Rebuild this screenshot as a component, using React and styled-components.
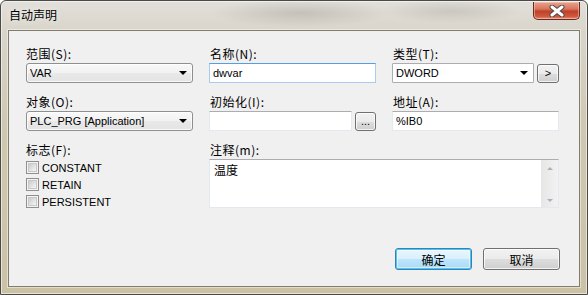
import React from "react";
import styled, { createGlobalStyle } from "styled-components";

const Global = createGlobalStyle`
  html, body { margin: 0; padding: 0; background: #ffffff; }
  * { box-sizing: border-box; }
`;

const cjk = `"Noto Sans CJK SC", "Microsoft YaHei", sans-serif`;
const latin = `"Liberation Sans", "Noto Sans CJK SC", sans-serif`;

const Window = styled.div`
  width: 588px;
  height: 295px;
  border: 1px solid #4b4a47;
  border-radius: 6px 6px 0 0;
  background:
    radial-gradient(ellipse 90px 14px at 300px 12px, rgba(120,115,105,0.25), transparent),
    radial-gradient(ellipse 70px 12px at 450px 10px, rgba(130,125,115,0.22), transparent),
    linear-gradient(to bottom, #e2e0da 0px, #d9d5cb 29px, #cfc8b2 120px, #cbc2a6 100%);
  box-shadow: inset 0 0 0 1px rgba(255, 255, 255, 0.55);
  display: flex;
  flex-direction: column;
  padding: 0 7px 7px 7px;
`;

const TitleBar = styled.div`
  height: 29px;
  display: flex;
  align-items: flex-start;
  justify-content: space-between;
`;

const Title = styled.div`
  font-family: ${cjk};
  font-size: 12px;
  line-height: 16px;
  color: #000;
  padding: 6px 0 0 1px;
  text-shadow: 0 0 6px rgba(255,255,255,0.9);
`;

const CloseButton = styled.div`
  width: 47px;
  height: 18px;
  margin: 1px 0 0 0;
  border: 1px solid #6b2a20;
  border-top: none;
  border-radius: 0 0 5px 5px;
  background: linear-gradient(to bottom, #e8a493 0%, #d7785f 40%, #c24027 55%, #cc5a3e 85%, #e6937a 100%);
  box-shadow: inset 0 0 0 1px rgba(255, 210, 195, 0.5);
  display: flex;
  align-items: center;
  justify-content: center;
`;

const Client = styled.div`
  flex: 1;
  background: #f0f0f0;
  border: 1px solid #827c6c;
  box-shadow: 0 0 0 1px rgba(255, 255, 255, 0.45);
  display: flex;
  flex-direction: column;
  padding: 15px 19px 16px 17px;
`;

const Grid = styled.div`
  display: grid;
  grid-template-columns: 167px 167px 167px;
  column-gap: 16px;
  row-gap: 11px;
`;

const Field = styled.div`
  display: flex;
  flex-direction: column;
  gap: 2px;
  grid-column: ${(p) => p.$span || "auto"};
`;

const Label = styled.div`
  font-family: ${cjk};
  font-size: 12px;
  line-height: 15px;
  height: 15px;
  letter-spacing: 0.5px;
  color: #000;
  padding-left: ${(p) => (p.$indent ? "1px" : "0")};
`;

const Row = styled.div`
  display: flex;
  gap: 3px;
`;

const Combo = styled.div`
  flex: 1;
  height: 20px;
  border: 1px solid ${(p) => (p.$editable ? "#abadb3" : "#8e8f8f")};
  border-radius: ${(p) => (p.$editable ? "1px" : "3px")};
  background: ${(p) =>
    p.$editable ? "#ffffff" : "linear-gradient(to bottom, #f9f9f9 0%, #f1f1f1 50%, #e9e9e9 51%, #e3e3e3 100%)"};
  box-shadow: ${(p) => (p.$editable ? "none" : "inset 0 0 0 1px rgba(255,255,255,0.8)")};
  display: flex;
  align-items: center;
  justify-content: space-between;
  padding: 0 4px 0 3px;
  font-family: ${latin};
  font-size: 11px;
  color: #000;
`;

const Arrow = styled.span`
  width: 0;
  height: 0;
  border-left: 4px solid transparent;
  border-right: 4px solid transparent;
  border-top: 4px solid #000;
  margin-right: 1px;
`;

const TextBox = styled.div`
  flex: 1;
  height: 20px;
  border: 1px solid #e3e9ef;
  border-top-color: #abadb3;
  background: #ffffff;
  display: flex;
  align-items: center;
  padding: 0 3px;
  font-family: ${latin};
  font-size: 11px;
  color: #000;
  ${(p) => (p.$focused ? "border-color: #a9cbee; border-top-color: #569de5;" : "")}
`;

const SmallButton = styled.div`
  width: ${(p) => p.$w || 22}px;
  height: ${(p) => p.$h || 19}px;
  margin-top: 1px;
  border: 1px solid #707070;
  border-radius: 3px;
  background: linear-gradient(to bottom, #f2f2f2 0%, #ebebeb 50%, #dddddd 51%, #cfcfcf 100%);
  box-shadow: inset 0 0 0 1px rgba(255,255,255,0.75);
  display: flex;
  align-items: center;
  justify-content: center;
  font-family: ${latin};
  font-size: 11px;
  color: #000;
  line-height: 1;
`;

const CheckList = styled.div`
  display: flex;
  flex-direction: column;
`;

const CheckRow = styled.div`
  height: 17px;
  display: flex;
  align-items: center;
  gap: 3px;
  font-family: ${latin};
  font-size: 11px;
  color: #000;
`;

const CheckBox = styled.span`
  width: 13px;
  height: 13px;
  border: 1px solid #8e8f8f;
  background: #f4f4f4;
  box-shadow: inset 0 0 0 1px #f4f4f4, inset 0 0 0 2px #c8c8c8;
  background-image: linear-gradient(135deg, #cbcbcb 0%, #f6f6f6 100%);
  background-origin: content-box;
  padding: 2px;
  background-clip: content-box;
`;

const Memo = styled.div`
  height: 49px;
  border: 1px solid #e3e9ef;
  border-top-color: #abadb3;
  background: #ffffff;
  display: flex;
  justify-content: space-between;
`;

const MemoText = styled.div`
  font-family: ${cjk};
  font-size: 12px;
  line-height: 15px;
  padding: 2px 4px;
  color: #000;
`;

const ScrollBar = styled.div`
  width: 17px;
  background: linear-gradient(to right, #e6e6e6, #f2f2f2);
  display: flex;
  flex-direction: column;
  justify-content: space-between;
  align-items: center;
  padding: 7px 0 5px;
`;

const ScrollArrow = styled.span`
  width: 0;
  height: 0;
  border-left: 3px solid transparent;
  border-right: 3px solid transparent;
  ${(p) => (p.$up ? "border-bottom: 3px solid #b0b0b0;" : "border-top: 3px solid #b0b0b0;")}
`;

const Spacer = styled.div`
  flex: 1;
`;

const ButtonRow = styled.div`
  display: flex;
  justify-content: flex-end;
  gap: 11px;
`;

const DialogButton = styled.div`
  width: 77px;
  height: 22px;
  border: 1px solid ${(p) => (p.$default ? "#3c7fb1" : "#707070")};
  border-radius: 3px;
  background: ${(p) =>
    p.$default
      ? "linear-gradient(to bottom, #eaf6fd 0%, #d9f0fc 50%, #bee6fd 51%, #a7d9f5 100%)"
      : "linear-gradient(to bottom, #f2f2f2 0%, #ebebeb 50%, #dddddd 51%, #cfcfcf 100%)"};
  box-shadow: ${(p) =>
    p.$default
      ? "inset 0 0 0 1px #48c6f7, inset 0 0 0 2px rgba(255,255,255,0.5)"
      : "inset 0 0 0 1px rgba(255,255,255,0.75)"};
  display: flex;
  align-items: center;
  justify-content: center;
  font-family: ${cjk};
  font-size: 12px;
  color: #000;
`;

function CloseX() {
  return (
    <svg width="16" height="12" viewBox="0 0 16 12">
      <path d="M3 2 L13 10 M13 2 L3 10" stroke="#4a4a4a" strokeWidth="5" strokeLinecap="round" />
      <path d="M3 2 L13 10 M13 2 L3 10" stroke="#ffffff" strokeWidth="3" strokeLinecap="round" />
    </svg>
  );
}

export default function App() {
  return (
    <>
      <Global />
      <Window>
        <TitleBar>
          <Title>自动声明</Title>
          <CloseButton>
            <CloseX />
          </CloseButton>
        </TitleBar>
        <Client>
          <Grid>
            <Field>
              <Label>范围(S):</Label>
              <Combo>
                VAR
                <Arrow />
              </Combo>
            </Field>
            <Field>
              <Label $indent>名称(N):</Label>
              <TextBox $focused>dwvar</TextBox>
            </Field>
            <Field>
              <Label $indent>类型(T):</Label>
              <Row>
                <Combo $editable>
                  DWORD
                  <Arrow />
                </Combo>
                <SmallButton $w={22}>&gt;</SmallButton>
              </Row>
            </Field>

            <Field>
              <Label>对象(O):</Label>
              <Combo>
                PLC_PRG [Application]
                <Arrow />
              </Combo>
            </Field>
            <Field>
              <Label $indent>初始化(I):</Label>
              <Row>
                <TextBox />
                <SmallButton $w={21}>...</SmallButton>
              </Row>
            </Field>
            <Field>
              <Label $indent>地址(A):</Label>
              <TextBox>%IB0</TextBox>
            </Field>

            <Field>
              <Label>标志(F):</Label>
              <CheckList>
                <CheckRow>
                  <CheckBox />
                  CONSTANT
                </CheckRow>
                <CheckRow>
                  <CheckBox />
                  RETAIN
                </CheckRow>
                <CheckRow>
                  <CheckBox />
                  PERSISTENT
                </CheckRow>
              </CheckList>
            </Field>
            <Field $span="2 / 4">
              <Label $indent>注释(m):</Label>
              <Memo>
                <MemoText>温度</MemoText>
                <ScrollBar>
                  <ScrollArrow $up />
                  <ScrollArrow />
                </ScrollBar>
              </Memo>
            </Field>
          </Grid>
          <Spacer />
          <ButtonRow>
            <DialogButton $default>确定</DialogButton>
            <DialogButton>取消</DialogButton>
          </ButtonRow>
        </Client>
      </Window>
    </>
  );
}
